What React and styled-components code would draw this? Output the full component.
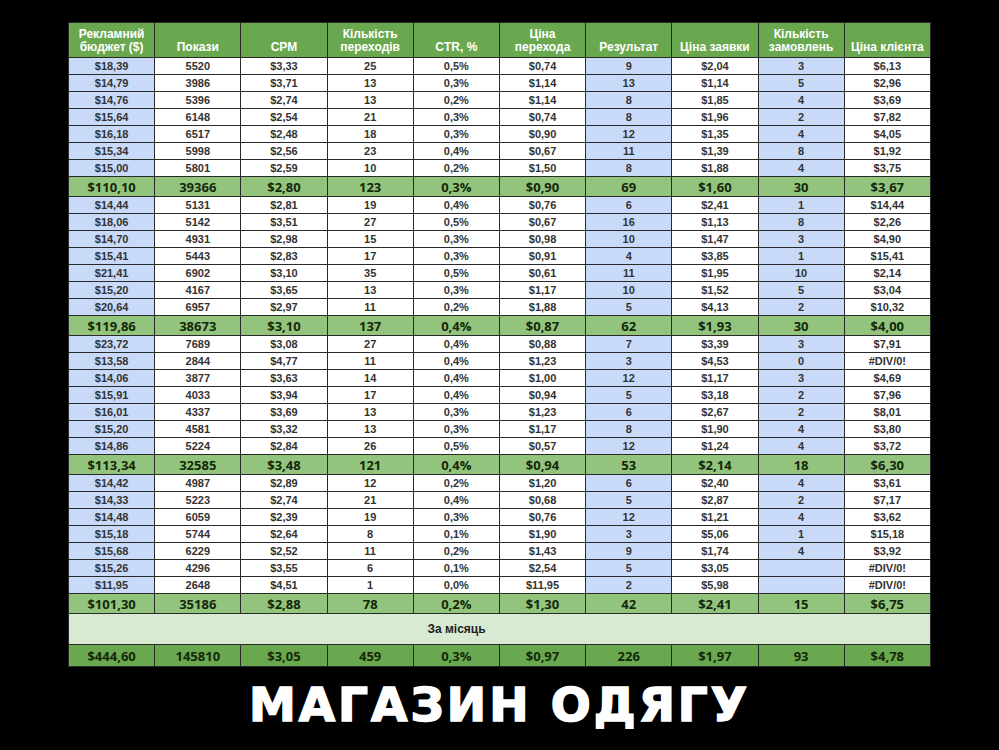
import React from 'react'
import styled, { createGlobalStyle } from 'styled-components'

const GlobalStyle = createGlobalStyle`
  html, body {
    margin: 0;
    padding: 0;
    background: #000;
  }
`

const Page = styled.div`
  width: 999px;
  height: 750px;
  background: #000;
  display: flex;
  flex-direction: column;
  align-items: center;
  padding-top: 22px;
  box-sizing: border-box;
  overflow: hidden;
`

const Table = styled.table`
  width: 863px;
  border-collapse: collapse;
  table-layout: fixed;
  font-family: 'Liberation Sans', Arial, sans-serif;
`

const HeadCell = styled.th`
  height: 31px;
  padding: 0 2px 3px;
  background: #6aa84f;
  color: #fff;
  font-size: 12px;
  line-height: 13px;
  font-weight: 700;
  text-align: center;
  vertical-align: bottom;
  border: 1px solid #2a2a2a;
`

const Cell = styled.td`
  height: 16px;
  padding: 0;
  background: ${({ $blue }) => ($blue ? '#c9daf8' : '#fff')};
  color: #333;
  font-size: 11px;
  line-height: 14px;
  font-weight: 700;
  text-align: center;
  vertical-align: middle;
  border: 1px solid #2a2a2a;
`

const SumCell = styled.td`
  height: ${({ $total }) => ($total ? '21px' : '19px')};
  padding: 0;
  background: ${({ $total }) => ($total ? '#6aa84f' : '#93c47d')};
  color: #14280a;
  font-family: 'Open Sans', 'Noto Sans', sans-serif;
  font-size: 13px;
  line-height: 16px;
  font-weight: 700;
  text-align: center;
  vertical-align: middle;
  border: 1px solid #2a2a2a;
`

const MonthCell = styled.td`
  height: 30px;
  padding: 0 86px 0 0;
  background: #d9ead3;
  color: #1e1e1e;
  font-size: 12px;
  line-height: 14px;
  font-weight: 700;
  text-align: center;
  border: 1px solid #2a2a2a;
`

const Title = styled.h1`
  margin: 12px 0 0;
  color: #fff;
  font-family: 'DejaVu Sans', sans-serif;
  font-weight: 900;
  font-size: 47px;
  letter-spacing: 3px;
  line-height: 52px;
  -webkit-text-stroke: 1.6px #fff;
`

const headers = [
  ['Рекламний', 'бюджет ($)'],
  ['Покази'],
  ['CPM'],
  ['Кількість', 'переходів'],
  ['CTR, %'],
  ['Ціна', 'перехода'],
  ['Результат'],
  ['Ціна заявки'],
  ['Кількість', 'замовлень'],
  ['Ціна клієнта']
]

const blueCols = [0, 6, 8]

const groups = [
  {
    rows: [
      ['$18,39', '5520', '$3,33', '25', '0,5%', '$0,74', '9', '$2,04', '3', '$6,13'],
      ['$14,79', '3986', '$3,71', '13', '0,3%', '$1,14', '13', '$1,14', '5', '$2,96'],
      ['$14,76', '5396', '$2,74', '13', '0,2%', '$1,14', '8', '$1,85', '4', '$3,69'],
      ['$15,64', '6148', '$2,54', '21', '0,3%', '$0,74', '8', '$1,96', '2', '$7,82'],
      ['$16,18', '6517', '$2,48', '18', '0,3%', '$0,90', '12', '$1,35', '4', '$4,05'],
      ['$15,34', '5998', '$2,56', '23', '0,4%', '$0,67', '11', '$1,39', '8', '$1,92'],
      ['$15,00', '5801', '$2,59', '10', '0,2%', '$1,50', '8', '$1,88', '4', '$3,75']
    ],
    sum: ['$110,10', '39366', '$2,80', '123', '0,3%', '$0,90', '69', '$1,60', '30', '$3,67']
  },
  {
    rows: [
      ['$14,44', '5131', '$2,81', '19', '0,4%', '$0,76', '6', '$2,41', '1', '$14,44'],
      ['$18,06', '5142', '$3,51', '27', '0,5%', '$0,67', '16', '$1,13', '8', '$2,26'],
      ['$14,70', '4931', '$2,98', '15', '0,3%', '$0,98', '10', '$1,47', '3', '$4,90'],
      ['$15,41', '5443', '$2,83', '17', '0,3%', '$0,91', '4', '$3,85', '1', '$15,41'],
      ['$21,41', '6902', '$3,10', '35', '0,5%', '$0,61', '11', '$1,95', '10', '$2,14'],
      ['$15,20', '4167', '$3,65', '13', '0,3%', '$1,17', '10', '$1,52', '5', '$3,04'],
      ['$20,64', '6957', '$2,97', '11', '0,2%', '$1,88', '5', '$4,13', '2', '$10,32']
    ],
    sum: ['$119,86', '38673', '$3,10', '137', '0,4%', '$0,87', '62', '$1,93', '30', '$4,00']
  },
  {
    rows: [
      ['$23,72', '7689', '$3,08', '27', '0,4%', '$0,88', '7', '$3,39', '3', '$7,91'],
      ['$13,58', '2844', '$4,77', '11', '0,4%', '$1,23', '3', '$4,53', '0', '#DIV/0!'],
      ['$14,06', '3877', '$3,63', '14', '0,4%', '$1,00', '12', '$1,17', '3', '$4,69'],
      ['$15,91', '4033', '$3,94', '17', '0,4%', '$0,94', '5', '$3,18', '2', '$7,96'],
      ['$16,01', '4337', '$3,69', '13', '0,3%', '$1,23', '6', '$2,67', '2', '$8,01'],
      ['$15,20', '4581', '$3,32', '13', '0,3%', '$1,17', '8', '$1,90', '4', '$3,80'],
      ['$14,86', '5224', '$2,84', '26', '0,5%', '$0,57', '12', '$1,24', '4', '$3,72']
    ],
    sum: ['$113,34', '32585', '$3,48', '121', '0,4%', '$0,94', '53', '$2,14', '18', '$6,30']
  },
  {
    rows: [
      ['$14,42', '4987', '$2,89', '12', '0,2%', '$1,20', '6', '$2,40', '4', '$3,61'],
      ['$14,33', '5223', '$2,74', '21', '0,4%', '$0,68', '5', '$2,87', '2', '$7,17'],
      ['$14,48', '6059', '$2,39', '19', '0,3%', '$0,76', '12', '$1,21', '4', '$3,62'],
      ['$15,18', '5744', '$2,64', '8', '0,1%', '$1,90', '3', '$5,06', '1', '$15,18'],
      ['$15,68', '6229', '$2,52', '11', '0,2%', '$1,43', '9', '$1,74', '4', '$3,92'],
      ['$15,26', '4296', '$3,55', '6', '0,1%', '$2,54', '5', '$3,05', '', '#DIV/0!'],
      ['$11,95', '2648', '$4,51', '1', '0,0%', '$11,95', '2', '$5,98', '', '#DIV/0!']
    ],
    sum: ['$101,30', '35186', '$2,88', '78', '0,2%', '$1,30', '42', '$2,41', '15', '$6,75']
  }
]

const total = ['$444,60', '145810', '$3,05', '459', '0,3%', '$0,97', '226', '$1,97', '93', '$4,78']

const App = () => {
  return (
    <Page>
      <GlobalStyle />
      <Table>
        <thead>
          <tr>
            {headers.map((lines, i) => (
              <HeadCell key={i}>
                {lines.map((l, j) => (
                  <div key={j}>{l}</div>
                ))}
              </HeadCell>
            ))}
          </tr>
        </thead>
        <tbody>
          {groups.map((g, gi) => (
            <React.Fragment key={gi}>
              {g.rows.map((row, ri) => (
                <tr key={ri}>
                  {row.map((v, ci) => (
                    <Cell key={ci} $blue={blueCols.includes(ci)}>
                      {v}
                    </Cell>
                  ))}
                </tr>
              ))}
              <tr>
                {g.sum.map((v, ci) => (
                  <SumCell key={ci}>{v}</SumCell>
                ))}
              </tr>
            </React.Fragment>
          ))}
          <tr>
            <MonthCell colSpan={10}>За місяць</MonthCell>
          </tr>
          <tr>
            {total.map((v, ci) => (
              <SumCell key={ci} $total>
                {v}
              </SumCell>
            ))}
          </tr>
        </tbody>
      </Table>
      <Title>МАГАЗИН ОДЯГУ</Title>
    </Page>
  )
}

export default App
